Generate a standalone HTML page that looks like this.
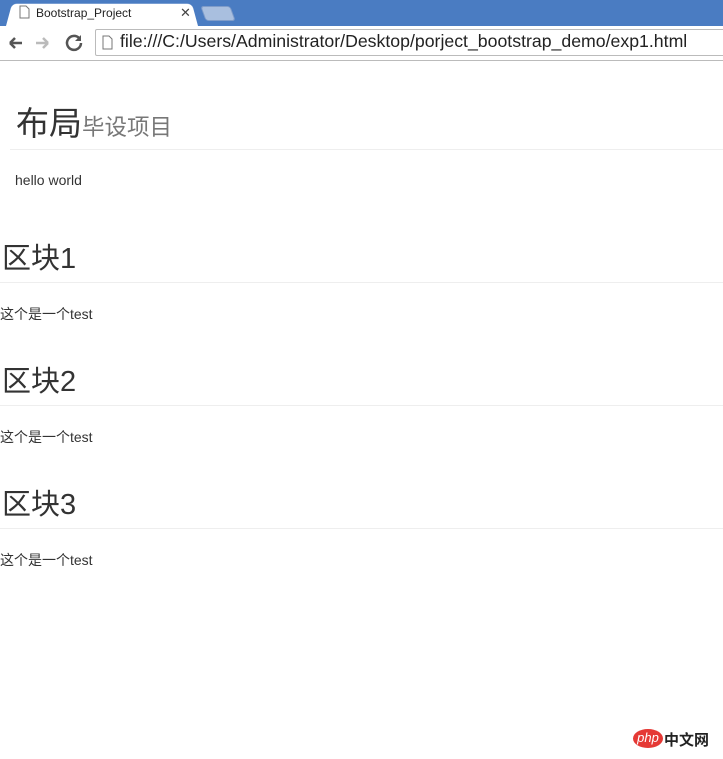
<!DOCTYPE html>
<html><head><meta charset="utf-8"><style>
*{margin:0;padding:0;box-sizing:border-box}
body{width:723px;height:759px;overflow:hidden;background:#fff;font-family:"Liberation Sans","Noto Sans CJK SC",sans-serif;color:#333;position:relative}
.tabbar{position:absolute;left:0;top:0;width:723px;height:26px;background:#4a7cc2}
.tab{position:absolute;left:6px;top:2px;width:192px;height:24px;background:#fff;border-radius:5px 5px 0 0;transform:perspective(50px) rotateX(8deg);transform-origin:bottom}
.tabt{position:absolute;left:36px;top:6px;font-size:12px;color:#222}
.tabx{position:absolute;left:180px;top:5px;font-size:13px;color:#444}
.newtab{position:absolute;left:203px;top:6px;width:30px;height:15px;background:#a9bfdf;border:1px solid #7f9cc9;border-radius:3px;transform:skewX(20deg)}
.tool{position:absolute;left:0;top:26px;width:723px;height:35px;background:#fff;border-bottom:1px solid #bbb}
.url{position:absolute;left:95px;top:29px;width:640px;height:27px;border:1px solid #bbb;border-radius:2px;background:#fff}
.urlt{position:absolute;left:120px;top:31px;font-size:17.7px;color:#222}
.h1{position:absolute;left:16px;top:97px;font-size:33px;color:#333;white-space:nowrap}
.h1 small{font-size:22.5px;color:#777}
.hr{position:absolute;left:0;width:723px;height:1px;background:#eee}
.p{position:absolute;font-size:14px;color:#333}
.h2{position:absolute;left:2px;font-size:29px;color:#333}
</style></head><body>
<div class="tabbar"></div>
<div class="tab"></div>
<svg style="position:absolute;left:19px;top:5px" width="11" height="14"><path d="M1 1h6l3 3v9H1z" fill="#fff" stroke="#777"/></svg>
<div class="tabt">Bootstrap_Project</div>
<div class="tabx">✕</div>
<div class="newtab"></div>
<div class="tool"></div>
<svg style="position:absolute;left:6px;top:33px" width="80" height="20">
<path d="M4 10h12M4 10l5-5M4 10l5 5" stroke="#555" stroke-width="2.5" fill="none"/>
<path d="M30 10h12M42 10l-5-5M42 10l-5 5" stroke="#bbb" stroke-width="2.5" fill="none"/>
<path d="M75 10a7 7 0 1 1-2-5" stroke="#555" stroke-width="2.5" fill="none"/><path d="M75 2v6h-6z" fill="#555"/>
</svg>
<div class="url"></div>
<svg style="position:absolute;left:102px;top:35px" width="11" height="15"><path d="M1 1h6l3 3v10H1z" fill="#fff" stroke="#777"/></svg>
<div class="urlt">file:///C:/Users/Administrator/Desktop/porject_bootstrap_demo/exp1.html</div>

<div class="h1">布局<small>毕设项目</small></div>
<div class="hr" style="top:149px;left:10px"></div>
<div class="p" style="left:15px;top:172px">hello world</div>

<div class="h2" style="top:235px">区块1</div>
<div class="hr" style="top:282px"></div>
<div class="p" style="left:0;top:304px">这个是一个test</div>
<div class="h2" style="top:358px">区块2</div>
<div class="hr" style="top:405px"></div>
<div class="p" style="left:0;top:427px">这个是一个test</div>
<div class="h2" style="top:481px">区块3</div>
<div class="hr" style="top:528px"></div>
<div class="p" style="left:0;top:550px">这个是一个test</div>

<div style="position:absolute;left:633px;top:729px;width:30px;height:19px;background:#e53935;border-radius:50%;color:#fff;font-size:13px;font-style:italic;text-align:center;line-height:18px">php</div>
<div style="position:absolute;left:664px;top:729px;font-size:15px;color:#222;font-weight:bold">中文网</div>
</body></html>
